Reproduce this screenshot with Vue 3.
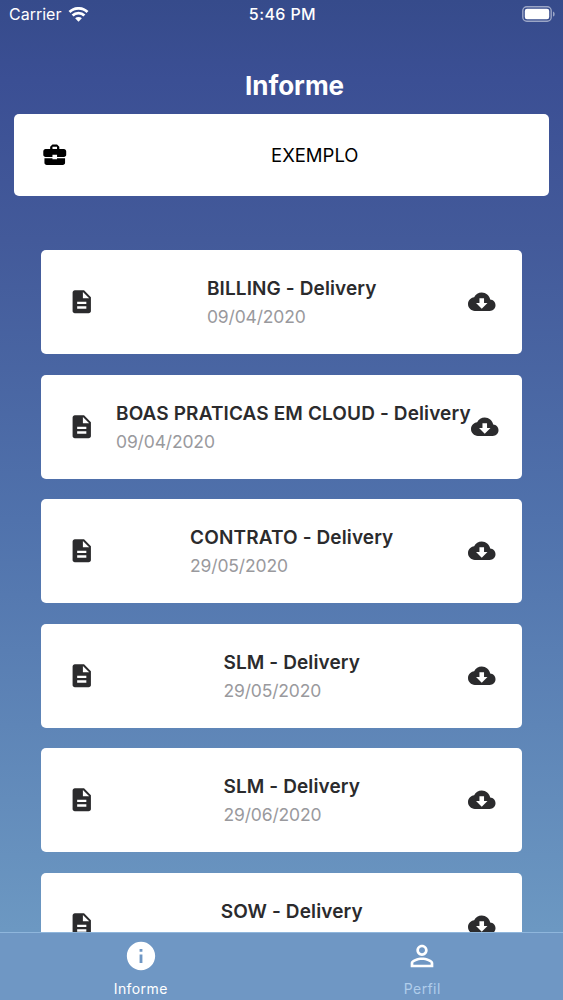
<template>
  <div class="screen">
    <!-- Status bar -->
    <div class="status-bar">
      <div class="carrier">
        <span class="carrier-name">Carrier</span>
        <svg class="wifi" viewBox="0 0 22 16">
          <path d="M1.4 5.4a13.7 13.7 0 0 1 19.2 0" />
          <path d="M4.7 9.1a8.9 8.9 0 0 1 12.6 0" />
          <path class="wifi-dot" d="M7.4 12a5.2 5.2 0 0 1 7.2 0L11 15.8z" />
        </svg>
      </div>
      <span class="clock">5:46 PM</span>
      <svg class="battery" viewBox="0 0 34 16">
        <rect class="battery-frame" x="0.8" y="0.8" width="28.4" height="14.4" rx="4" />
        <rect x="2.8" y="2.8" width="24.4" height="10.4" rx="2.2" fill="#fff" />
        <path d="M31 5.4c2.2.8 2.2 4.4 0 5.2z" fill="#fff" opacity="0.5" />
      </svg>
    </div>

    <h1 class="title">Informe</h1>

    <div class="company">
      <svg class="icon" viewBox="0 0 24 24">
        <path :d="icons.briefcase" />
      </svg>
      <span class="company-name">EXEMPLO</span>
    </div>

    <!-- Document list -->
    <div class="documents">
      <div v-for="(doc, index) in documents" :key="index" class="document">
        <svg class="icon" viewBox="0 0 24 24">
          <path :d="icons.file" />
        </svg>
        <div class="document-text">
          <div class="document-name">{{ doc.name }}</div>
          <div class="document-date">{{ doc.date }}</div>
        </div>
        <svg class="icon" viewBox="0 0 24 24">
          <path :d="icons.download" />
        </svg>
      </div>
    </div>

    <!-- Bottom tabs -->
    <nav class="tabs">
      <button
        v-for="tab in tabs"
        :key="tab.name"
        class="tab"
        :class="{ active: activeTab === tab.name }"
        @click="activeTab = tab.name"
      >
        <svg class="tab-icon" viewBox="0 0 24 24">
          <path :d="tab.icon" />
        </svg>
        <span class="tab-label">{{ tab.name }}</span>
      </button>
    </nav>
  </div>
</template>

<script setup>
import { ref } from 'vue'

const icons = {
  briefcase: 'M10 16v-1H3.01L3 19c0 1.11.89 2 2 2h14c1.11 0 2-.89 2-2v-4h-7v1h-4zm10-9h-4.01V5l-2-2h-4l-2 2v2H4c-1.1 0-2 .9-2 2v3c0 1.11.89 2 2 2h6v-2h4v2h6c1.1 0 2-.9 2-2V9c0-1.1-.9-2-2-2zm-6 0h-4V5h4v2z',
  file: 'M14 2H6c-1.1 0-1.99.9-1.99 2L4 20c0 1.1.89 2 1.99 2H18c1.1 0 2-.9 2-2V8l-6-6zm2 16H8v-2h8v2zm0-4H8v-2h8v2zm-3-5V3.5L18.5 9H13z',
  download: 'M19.35 10.04C18.67 6.59 15.64 4 12 4 9.11 4 6.6 5.64 5.35 8.04 2.34 8.36 0 10.91 0 14c0 3.31 2.69 6 6 6h13c2.76 0 5-2.24 5-5 0-2.64-2.05-4.78-4.65-4.96zM17 13l-5 5-5-5h3V9h4v4h3z'
}

const documents = [
  { name: 'BILLING - Delivery', date: '09/04/2020' },
  { name: 'BOAS PRATICAS EM CLOUD - Delivery', date: '09/04/2020' },
  { name: 'CONTRATO - Delivery', date: '29/05/2020' },
  { name: 'SLM - Delivery', date: '29/05/2020' },
  { name: 'SLM - Delivery', date: '29/06/2020' },
  { name: 'SOW - Delivery', date: '' }
]

const tabs = [
  {
    name: 'Informe',
    icon: 'M12 2C6.48 2 2 6.48 2 12s4.48 10 10 10 10-4.48 10-10S17.52 2 12 2zm1 15h-2v-6h2v6zm0-8h-2V7h2v2z'
  },
  {
    name: 'Perfil',
    icon: 'M12 5.9c1.16 0 2.1.94 2.1 2.1s-.94 2.1-2.1 2.1S9.9 9.16 9.9 8s.94-2.1 2.1-2.1m0 9c2.97 0 6.1 1.46 6.1 2.1v1.1H5.9V17c0-.64 3.13-2.1 6.1-2.1M12 4C9.79 4 8 5.79 8 8s1.79 4 4 4 4-1.79 4-4-1.79-4-4-4zm0 9c-2.67 0-8 1.34-8 4v3h16v-3c0-2.66-5.33-4-8-4z'
  }
]

const activeTab = ref('Informe')
</script>

<style>
body {
  margin: 0;
}
</style>

<style scoped>
.screen {
  display: flex;
  flex-direction: column;
  height: 100vh;
  overflow: hidden;
  font-family: Inter, "Liberation Sans", sans-serif;
  background: linear-gradient(#364b8b 0%, #3b4f94 8%, #435a9a 24%, #5072ac 52%, #6c98c2 93%);
}

.status-bar {
  display: grid;
  grid-template-columns: 1fr auto 1fr;
  align-items: center;
  height: 28px;
  padding: 0 7px 0 9px;
  color: #fff;
  font-size: 16px;
  flex-shrink: 0;
}

.carrier {
  display: flex;
  align-items: center;
  gap: 6.5px;
}

.wifi {
  width: 21px;
  height: 15px;
  fill: none;
  stroke: #fff;
  stroke-width: 3;
}

.wifi-dot {
  fill: #fff;
  stroke: none;
}

.clock {
  font-weight: 500;
  letter-spacing: 0.4px;
}

.battery {
  width: 34px;
  height: 16px;
  justify-self: end;
}

.battery-frame {
  fill: none;
  stroke: #fff;
  stroke-opacity: 0.5;
  stroke-width: 1.4;
}

.title {
  margin: 39px 0 0;
  padding-left: 26px;
  height: 47px;
  line-height: 37px;
  color: #fff;
  font-size: 26px;
  font-weight: 700;
  text-align: center;
  flex-shrink: 0;
}

.company {
  display: flex;
  align-items: center;
  height: 81.5px;
  margin: 0 14px;
  padding: 0 27px;
  box-sizing: border-box;
  background: #fff;
  border-radius: 5px;
  color: #000;
  flex-shrink: 0;
}

.company-name {
  flex: 1;
  padding-left: 39px;
  font-size: 18.5px;
  text-align: center;
}

.icon {
  width: 27.5px;
  height: 27.5px;
  fill: currentColor;
  flex-shrink: 0;
  overflow: visible;
}

.documents {
  flex: 1;
  min-height: 0;
  margin-top: 54.5px;
  padding: 0 41px;
  overflow: hidden;
}

.document {
  display: flex;
  align-items: center;
  justify-content: space-between;
  height: 104px;
  margin-bottom: 20.5px;
  padding: 0 27px;
  box-sizing: border-box;
  background: #fff;
  border-radius: 5px;
  color: #2b2b2d;
}

.document-text {
  margin-left: 20.5px;
  padding-top: 2px;
  white-space: nowrap;
  flex-shrink: 0;
}

.document-name {
  font-size: 19px;
  font-weight: 600;
  line-height: 28px;
  letter-spacing: 0.12px;
}

.document-date {
  min-height: 28px;
  color: #99999d;
  font-size: 17.5px;
  line-height: 28px;
  letter-spacing: -0.15px;
}

.tabs {
  display: flex;
  height: 68px;
  box-sizing: border-box;
  background: #6f97c4;
  border-top: 1px solid #8fb6dc;
  flex-shrink: 0;
}

.tab {
  display: flex;
  flex: 1;
  flex-direction: column;
  align-items: center;
  padding: 6px 0 0;
  border: none;
  background: none;
  color: #b0cdeb;
  font-family: inherit;
  cursor: pointer;
}

.tab.active {
  color: #fff;
}

.tab-icon {
  width: 34px;
  height: 34px;
  fill: #fff;
}

.tab-label {
  margin-top: 7px;
  font-size: 14px;
  line-height: 18px;
  letter-spacing: 0.4px;
}
</style>
